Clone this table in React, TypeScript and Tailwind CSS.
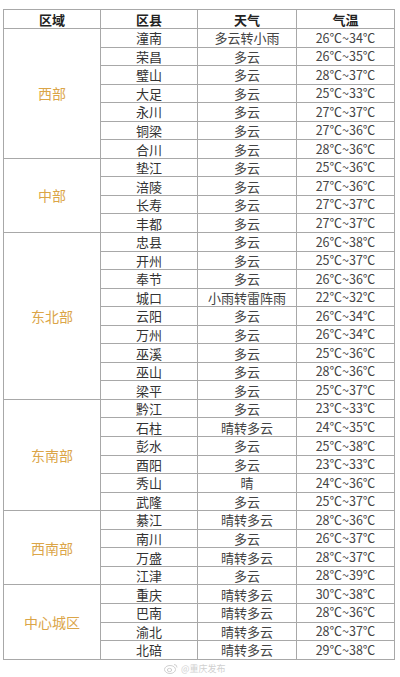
const groups: { region: string; rows: [string, string, string][] }[] = [
  {
    region: "西部",
    rows: [
      ["潼南", "多云转小雨", "26℃~34℃"],
      ["荣昌", "多云", "26℃~35℃"],
      ["璧山", "多云", "28℃~37℃"],
      ["大足", "多云", "25℃~33℃"],
      ["永川", "多云", "27℃~37℃"],
      ["铜梁", "多云", "27℃~36℃"],
      ["合川", "多云", "28℃~36℃"],
    ],
  },
  {
    region: "中部",
    rows: [
      ["垫江", "多云", "25℃~36℃"],
      ["涪陵", "多云", "27℃~36℃"],
      ["长寿", "多云", "27℃~37℃"],
      ["丰都", "多云", "27℃~37℃"],
    ],
  },
  {
    region: "东北部",
    rows: [
      ["忠县", "多云", "26℃~38℃"],
      ["开州", "多云", "25℃~37℃"],
      ["奉节", "多云", "26℃~36℃"],
      ["城口", "小雨转雷阵雨", "22℃~32℃"],
      ["云阳", "多云", "26℃~34℃"],
      ["万州", "多云", "26℃~34℃"],
      ["巫溪", "多云", "25℃~36℃"],
      ["巫山", "多云", "28℃~36℃"],
      ["梁平", "多云", "25℃~37℃"],
    ],
  },
  {
    region: "东南部",
    rows: [
      ["黔江", "多云", "23℃~33℃"],
      ["石柱", "晴转多云", "24℃~35℃"],
      ["彭水", "多云", "25℃~38℃"],
      ["酉阳", "多云", "23℃~33℃"],
      ["秀山", "晴", "24℃~36℃"],
      ["武隆", "多云", "25℃~37℃"],
    ],
  },
  {
    region: "西南部",
    rows: [
      ["綦江", "晴转多云", "28℃~36℃"],
      ["南川", "多云", "26℃~37℃"],
      ["万盛", "晴转多云", "28℃~37℃"],
      ["江津", "多云", "28℃~39℃"],
    ],
  },
  {
    region: "中心城区",
    rows: [
      ["重庆", "晴转多云", "30℃~38℃"],
      ["巴南", "晴转多云", "28℃~36℃"],
      ["渝北", "晴转多云", "28℃~37℃"],
      ["北碚", "晴转多云", "29℃~38℃"],
    ],
  },
];

const cell = "border border-[#a8a8a8] p-0 text-center align-middle leading-none";

export default function App() {
  return (
    <div
      className="relative h-[677px] w-[400px] overflow-hidden bg-white pl-[3px] pt-[9px]"
      style={{ fontFamily: '"Noto Sans CJK SC", "Noto Sans", sans-serif' }}
    >
      <table className="w-[391px] table-fixed border-collapse text-[13px] text-[#3a3a3a]">
        <colgroup>
          <col className="w-[97px]" />
          <col className="w-[97px]" />
          <col className="w-[99px]" />
          <col className="w-[98px]" />
        </colgroup>
        <thead>
          <tr className="h-[19px]">
            <th className={`${cell} font-bold text-[#222]`}>区域</th>
            <th className={`${cell} font-bold text-[#222]`}>区县</th>
            <th className={`${cell} font-bold text-[#222]`}>天气</th>
            <th className={`${cell} font-bold text-[#222]`}>气温</th>
          </tr>
        </thead>
        <tbody>
          {groups.map((g) =>
            g.rows.map((r, i) => (
              <tr key={g.region + r[0]} className="h-[18.55px]">
                {i === 0 && (
                  <td
                    rowSpan={g.rows.length}
                    className={`${cell} text-[14px] text-[#dba548]`}
                  >
                    {g.region}
                  </td>
                )}
                <td className={`${cell} text-[#333]`}>{r[0]}</td>
                <td className={`${cell} text-[#444]`}>{r[1]}</td>
                <td className={`${cell} text-[12.5px] text-[#444]`}>{r[2]}</td>
              </tr>
            ))
          )}
        </tbody>
      </table>
      <div className="mt-[2px] flex items-center gap-[3px] pl-[161px] text-[9px] text-[#d0d0d0]">
        <svg width="14" height="11" viewBox="0 0 14 11" fill="none" stroke="#d0d0d0" strokeWidth="1">
          <ellipse cx="6" cy="6.5" rx="5.5" ry="4" />
          <ellipse cx="5.5" cy="7" rx="2.2" ry="1.6" />
          <path d="M10 1.5a3 3 0 0 1 3 3" />
        </svg>
        <span>@重庆发布</span>
      </div>
    </div>
  );
}
